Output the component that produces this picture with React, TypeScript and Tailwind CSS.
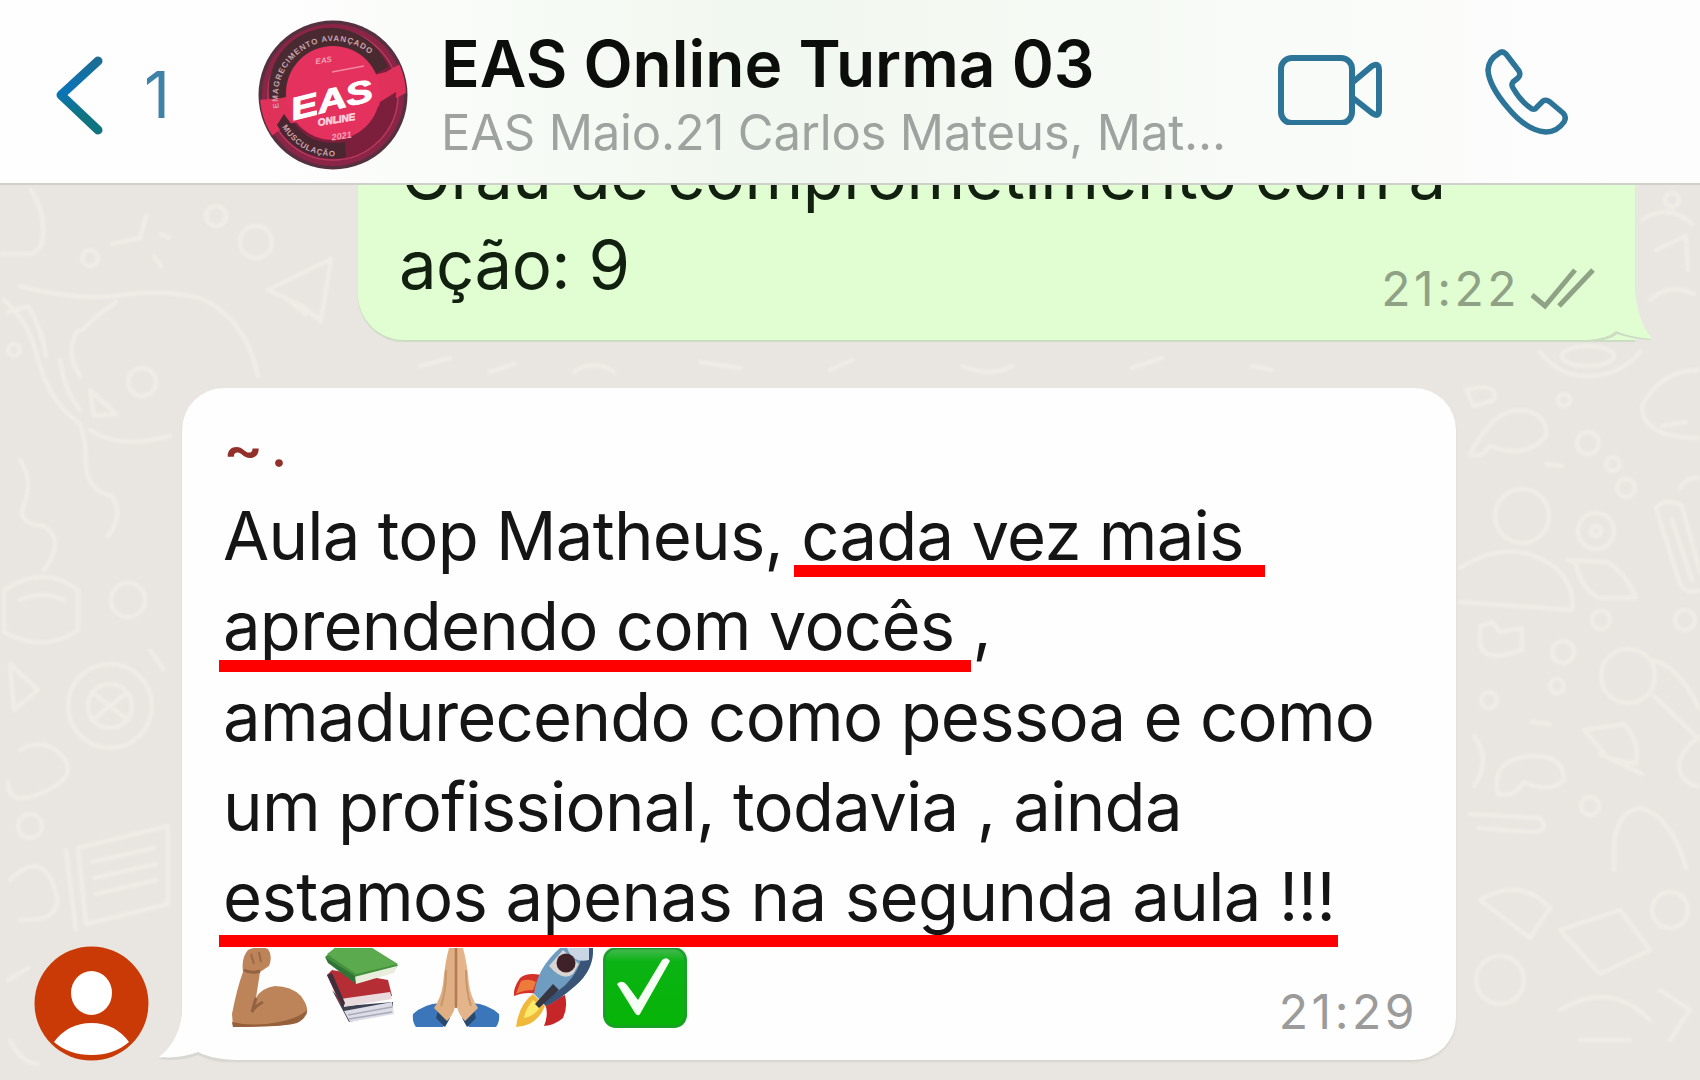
import type { ReactNode } from "react";

function Doodles() {
  return (
    <svg className="absolute inset-0 h-full w-full blur-[1px]" viewBox="0 0 1700 1080" fill="none" stroke="#efece6" strokeWidth="4.5" strokeLinecap="round" strokeLinejoin="round">
      <path d="M0 254h32q10 -5 11 -18q2 -24 -12 -46" />
      <path d="M112 244l28 -6l6 -22m8 40l7 10m0 -32l8 4" />
      <circle cx="216" cy="216" r="10" />
      <circle cx="256" cy="242" r="16" />
      <circle cx="90" cy="258" r="8" />
      <path d="M268 290l63 -31l-10 62l-20 -16zM288 300l18 14" />
      <path d="M20 286q50 14 96 10q40 -8 84 2q46 20 58 78M82 330q16 -16 34 -28" />
      <path d="M4 300q26 22 34 60q12 42 40 62q8 10 8 46q4 24 26 28q12 20 -4 40" />
      <path d="M8 312l20 -6q14 22 18 50M60 360q4 30 20 50M78 330q-14 22 2 46M90 390l26 24l-22 2z" />
      <circle cx="142" cy="382" r="14" />
      <circle cx="14" cy="350" r="6" />
      <path d="M20 460q14 20 4 44q-8 20 20 22q22 14 0 44M90 430q30 20 80 6" />
      <path d="M4 590q40 -26 74 0v40q-34 24 -74 2zM20 600q22 -10 44 0" />
      <circle cx="128" cy="600" r="17" />
      <circle cx="110" cy="706" r="42" />
      <circle cx="110" cy="706" r="22" />
      <path d="M92 692l36 28m0 -28l-36 28M10 664l28 26l-24 20zM150 650l14 20M20 750q24 -14 42 6t-18 36t-36 -10" />
      <path d="M78 848l90 -22v78l-82 20zM92 862l62 -14M94 878l62 -14M96 894l60 -14M66 850l10 80M10 880q30 -30 44 6t-34 34" />
      <circle cx="30" cy="826" r="12" />
      <path d="M8 980l20 -12M10 1040q10 22 28 24" />
      <path d="M1642 220q26 -18 50 4M1656 250l30 -14l2 34M1650 300q20 -18 44 -6" />
      <circle cx="1672" cy="200" r="7" />
      <path d="M1540 352q20 26 52 24q30 -2 48 -24" />
      <ellipse cx="1588" cy="356" rx="26" ry="10" />
      <path d="M1466 390q34 -8 28 10l-20 6zM1470 454q24 -46 52 -44q26 4 24 26q-20 24 -56 10q-10 14 -20 8z" />
      <path d="M1700 370q-40 0 -58 36q0 32 58 32M1662 426l24 -4" />
      <circle cx="1564" cy="400" r="6" />
      <circle cx="1588" cy="443" r="11" />
      <circle cx="1613" cy="464" r="7" />
      <circle cx="1626" cy="488" r="9" />
      <path d="M1546 464l16 2" />
      <circle cx="1522" cy="516" r="27" />
      <circle cx="1596" cy="531" r="18" />
      <circle cx="1596" cy="531" r="5" />
      <path d="M1460 568q54 -34 98 2q18 20 14 40l-112 -8M1568 560l40 2q20 14 28 36h-38q-18 -12 -22 -34z" />
      <path d="M1656 508q10 -12 26 -2l18 66M1656 508l24 76q8 12 20 6M1672 520l20 60M1680 488q6 -12 20 -10" />
      <path d="M1480 626l12 -4l8 10l22 -4v22l-22 6q-20 0 -20 -14z" />
      <circle cx="1601" cy="620" r="9" />
      <circle cx="1685" cy="620" r="10" />
      <circle cx="1563" cy="652" r="11" />
      <circle cx="1557" cy="686" r="7" />
      <circle cx="1489" cy="700" r="8" />
      <path d="M1532 722l18 2" />
      <circle cx="1628" cy="676" r="27" />
      <path d="M1650 660q28 4 50 50M1654 696l46 44" />
      <path d="M1584 730l40 -6q16 16 12 40l-28 -6zM1600 754l42 20" />
      <path d="M1474 736q18 24 0 50M1498 794q-8 -36 36 -38q30 0 30 24q-14 14 -40 2q-10 16 -26 12z" />
      <path d="M1700 736q-26 20 -20 36q6 14 20 14M1470 814l70 4q10 12 -6 14l-56 -4" />
      <circle cx="1590" cy="806" r="9" />
      <path d="M1614 870v-28q6 -34 28 -34q30 10 44 60M1480 900q40 -24 70 8l-20 30zM1560 930l60 -20l30 40l-50 24z" />
      <circle cx="1670" cy="910" r="18" />
      <circle cx="1500" cy="980" r="24" />
      <path d="M1560 1010q50 -30 90 10M1580 1040h50M1660 990l30 20l-20 30" />
      <path d="M420 366l30 -8m40 14l24 -8m60 8q20 -14 40 0M700 362l40 6m90 2l22 -10m110 6q30 12 50 0m120 2l30 -10m90 8l20 4" />
    </svg>
  );
}

function GroupLogo() {
  return (
    <svg className="ml-[85px] size-[150px] shrink-0" viewBox="0 0 150 150">
      <defs>
        <path id="ring-top" d="M21 88A56 56 0 0 1 126 52" />
        <path id="ring-bottom" d="M24 107A60 60 0 0 0 92 134" />
        <clipPath id="badge">
          <circle cx="75" cy="75" r="73" />
        </clipPath>
      </defs>
      <circle cx="75" cy="75" r="74.5" fill="#55303f" />
      <circle cx="75" cy="75" r="71" fill="#8a2547" />
      <circle cx="75" cy="75" r="65" fill="#7b1f3d" stroke="#b8395d" strokeWidth="1.5" />
      <path d="M15 92A61 61 0 0 1 130 47L117 54A48 48 0 0 0 28 86Z" fill="#4a2a31" />
      <path d="M20 102A61 61 0 0 0 88 137L86 124A50 50 0 0 1 33 98Z" fill="#4a2630" />
      <g clipPath="url(#badge)">
        <path d="M0 80L24 78L128 52L142 44L150 66L150 72L122 86L30 104L8 120Z" fill="#e0315b" />
      </g>
      <circle cx="75" cy="73" r="47" fill="#e5315d" />
      <path d="M122 82L138 72A64 64 0 0 1 94 136L88 123Q116 112 122 82Z" fill="#7b1f3d" />
      <path d="M26 94L19 105A62 62 0 0 0 88 137L87 122Q48 128 26 94Z" fill="#4a2630" />
      <g fontFamily="Liberation Sans" fontWeight="bold" fill="#c9a3aa">
        <text fontSize="8" letterSpacing="0.9">
          <textPath href="#ring-top">EMAGRECIMENTO AVANÇADO</textPath>
        </text>
        <text fontSize="8" letterSpacing="0.6">
          <textPath href="#ring-bottom">MUSCULAÇÃO</textPath>
        </text>
      </g>
      <g fontFamily="Liberation Sans" fontWeight="bold" fontStyle="italic" textAnchor="middle">
        <text transform="translate(76 90) rotate(-14) scale(1.32 1)" fontSize="31" fill="#fff" stroke="#fff" strokeWidth="1">EAS</text>
        <text transform="translate(79 103) rotate(-9)" fontSize="10" fill="#fbd5de" stroke="#fbd5de" strokeWidth="0.6">ONLINE</text>
        <text transform="translate(66 43) rotate(-8)" fontSize="8" fill="#f6a3b8">EAS</text>
        <text transform="translate(84 119) rotate(-8)" fontSize="9" fill="#f6a3b8">2021</text>
      </g>
      <path d="M74 52L106 46" stroke="#f28aa3" strokeWidth="1.5" />
    </svg>
  );
}

function Header() {
  return (
    <header className="relative z-10 flex h-[185px] items-start border-b-2 border-[#cfd0ca] bg-linear-to-r from-[#fefefe] from-15% via-[#f1f8ef] via-45% to-[#fdfdfd] to-95% pt-5">
      <svg className="mt-[33px] ml-[53px] h-[84px] w-[54px] shrink-0" viewBox="0 0 54 84" fill="none">
        <defs>
          <linearGradient id="back" x1="0" y1="0" x2="0" y2="84" gradientUnits="userSpaceOnUse">
            <stop offset="0.1" stopColor="#1b6d94" />
            <stop offset="0.45" stopColor="#0b74b8" />
            <stop offset="0.75" stopColor="#0f7480" />
          </linearGradient>
        </defs>
        <path d="M45 8L8 42L45 77" stroke="url(#back)" strokeWidth="9" strokeLinecap="round" strokeLinejoin="round" />
      </svg>
      <span className="mt-[35px] ml-[37px] w-[29px] text-[64px] leading-[80px] text-[#3f82a8]">1</span>
      <GroupLogo />
      <div className="ml-[33px] w-[830px] whitespace-nowrap">
        <h1 className="pt-1 text-[64px] leading-[80px] font-semibold text-[#0c0e0c]">EAS Online Turma 03</h1>
        <p className="mt-[-1px] text-[49px] leading-[60px] tracking-[-0.2px] text-[#9fa39f]">EAS Maio.21 Carlos Mateus, Mat...</p>
      </div>
      <svg className="mt-[35px] ml-[7px] h-[70px] w-[106px] shrink-0" viewBox="0 0 106 70" fill="none" stroke="#2d7499" strokeWidth="6" strokeLinejoin="round">
        <rect x="3" y="3" width="71" height="65" rx="11" />
        <path d="M75 27L94 11Q101 7 101 15V55Q101 63 94 58L75 43" />
      </svg>
      <svg className="mt-[28px] ml-[101px] h-[87px] w-[84px] shrink-0" viewBox="0 0 84 87" fill="none" stroke="#2d7499" strokeWidth="5.5" strokeLinejoin="round">
        <path d="M13 6Q17 2 21 6L34 23Q36 27 33 30L28 34Q26 37 28 40Q36 54 47 61Q50 62 52 59L58 53Q61 51 65 54L78 65Q82 69 79 74Q72 84 61 84Q42 83 23 60Q4 38 3 22Q4 11 13 6Z" />
      </svg>
    </header>
  );
}

function Marked({ bar, children }: { bar: string; children: ReactNode }) {
  return (
    <span className="relative">
      {children}
      <span className={`absolute h-3 bg-[#fe0000] ${bar}`} />
    </span>
  );
}

function Biceps() {
  return (
    <svg className="h-[82px] w-[88px]" viewBox="0 0 88 82">
      <path d="M25 2Q36 -3 45 1Q50 8 46 18L37 24L33 50Q38 40 52 38Q68 38 78 48Q88 62 82 68Q72 77 50 78L10 79L9 66Q14 40 20 24Q18 10 25 2Z" fill="#bd8459" />
      <path d="M9 74Q30 79 56 74Q76 70 84 62Q84 70 74 75Q60 79 10 79Z" fill="#96603c" />
      <path d="M33 50L29 64Q32 58 40 54M21 22Q28 26 37 23" stroke="#936242" strokeWidth="3" fill="none" />
      <path d="M28 6l3 10m5 -12l2 10" stroke="#9a6948" strokeWidth="2" />
    </svg>
  );
}

function Books() {
  return (
    <svg className="h-[82px] w-[88px]" viewBox="0 0 88 82">
      <path d="M14 42L31 74L75 64V54L28 58Z" fill="#3b4152" />
      <path d="M26 63L74 54L76 66L32 74Z" fill="#dcdce6" />
      <path d="M30 67l44 -8M31 71l43 -7" stroke="#a9aab8" strokeWidth="1.5" />
      <path d="M9 27L22 56L74 48L70 32L14 22Z" fill="#b52e35" />
      <path d="M22 51L72 44L74 51L26 59Z" fill="#e8dadd" />
      <path d="M9 27L14 25L27 55L25 60Z" fill="#3d2f3b" />
      <path d="M17 0H54L80 17L76 23L38 35L7 9Z" fill="#44913d" />
      <path d="M17 0H54L80 16L38 26L9 6Z" fill="#5baa4d" />
      <path d="M36 29L79 18L76 25L38 36Z" fill="#e9eddc" />
      <path d="M7 9L37 28L38 36L10 15Z" fill="#317536" />
    </svg>
  );
}

function Pray() {
  return (
    <svg className="h-[82px] w-[88px]" viewBox="0 0 88 82">
      <path d="M1 66Q12 56 28 55L36 72L31 79H4Q0 74 1 66ZM87 66Q76 56 60 55L52 72L57 79H84Q88 74 87 66Z" fill="#3a76b9" />
      <path d="M28 55L38 70L33 79L24 70ZM60 55L50 70L55 79L64 70Z" fill="#27486f" />
      <path d="M37 0H43V58Q42 66 35 73L22 60Q29 50 31 36Q33 14 37 0Z" fill="#dfae82" />
      <path d="M51 0H45V58Q46 66 53 73L66 60Q59 50 57 36Q55 14 51 0Z" fill="#e4b58b" />
      <path d="M44 0V60" stroke="#b07b55" strokeWidth="2.5" />
      <path d="M34 22Q34 44 29 58M54 22Q54 44 59 58" stroke="#c8966d" strokeWidth="2" fill="none" />
    </svg>
  );
}

function Rocket() {
  return (
    <svg className="h-[82px] w-[88px]" viewBox="0 0 88 82">
      <path d="M26 46Q12 56 9 79Q30 78 38 58Z" fill="#f0b93b" />
      <path d="M26 52Q18 62 17 70Q28 68 34 58Z" fill="#fbe96a" />
      <path d="M34 27Q20 24 13 30Q6 40 7 48Q18 43 30 46Z" fill="#d3322b" />
      <path d="M58 47Q61 60 56 70Q48 77 37 78Q42 66 38 56Z" fill="#c72628" />
      <path d="M14 33Q22 30 29 34L26 42Q16 42 9 46Z" fill="#ee7a3c" />
      <path d="M53 0H86Q87 22 68 38Q52 52 39 58L27 46Q30 20 53 0Z" fill="#6f9cc1" />
      <path d="M76 0H86Q87 22 68 38Q52 52 39 58L34 53Q74 34 76 0Z" fill="#3a5478" />
      <path d="M60 0Q66 16 82 12V0Z" fill="#c9d5e2" />
      <path d="M42 18Q56 34 66 26L72 16L56 2Z" fill="#d8d5d3" />
      <circle cx="59" cy="15" r="9.5" fill="#3f2229" />
      <path d="M46 36L28 56L32 60L52 42Z" fill="#373744" />
    </svg>
  );
}

function Check() {
  return (
    <svg className="h-[82px] w-[88px]" viewBox="0 0 88 82">
      <defs>
        <linearGradient id="tile" x1="0" y1="0" x2="0" y2="1">
          <stop offset="0" stopColor="#4cba58" />
          <stop offset="0.18" stopColor="#0bb314" />
          <stop offset="1" stopColor="#06b406" />
        </linearGradient>
      </defs>
      <rect x="2" y="-1" width="84" height="81" rx="13" fill="url(#tile)" />
      <rect x="3.5" y="0.5" width="81" height="78" rx="12" fill="none" stroke="#1d9a30" strokeWidth="2" />
      <path d="M16 36Q21 31 26 37L37 52L61 12Q66 8 69 13L39 66Q37 69 34 65Z" fill="#f6fff4" />
    </svg>
  );
}

function OutgoingMessage() {
  return (
    <article className="relative ml-[358px] h-[155px] w-[1277px] rounded-bl-[46px] bg-[#e1fdd2] pl-[41px] shadow-[0_2px_1px_#cbdcc2]">
      <svg className="absolute right-[-18px] bottom-[-3px] h-[56px] w-[66px]" viewBox="0 0 66 56">
        <path d="M48 4Q50 38 64 53Q44 52 30 47Q22 54 0 55" fill="#cbdcc2" />
        <path d="M0 0H48Q50 34 65 52Q42 50 29 44Q20 52 0 53Z" fill="#e1fdd2" />
      </svg>
      <p className="relative mt-[-55px] whitespace-nowrap text-[67px] leading-[90px] text-[#122010]">
        <span className="block pl-0.5 tracking-[-0.52px]">Grau de comprometimento com a</span>
        <span className="block tracking-[-0.5px]">ação: 9</span>
      </p>
      <div className="absolute right-[40px] bottom-[21px] flex items-center text-[#8fa286]">
        <time className="text-[48px] leading-[60px] tracking-[3.5px]">21:22</time>
        <svg className="ml-[11px] h-[42px] w-[64px]" viewBox="0 0 64 42" fill="none" stroke="currentColor" strokeWidth="5">
          <path d="M1 27L14 38L44 2M28 38L62 2" />
        </svg>
      </div>
    </article>
  );
}

function IncomingMessage() {
  return (
    <div className="relative mt-12 flex items-end pl-[34px]">
      <svg className="mb-[-1px] size-[115px] shrink-0" viewBox="0 0 115 115">
        <circle cx="57.5" cy="57.5" r="57" fill="#c93a06" />
        <ellipse cx="57.5" cy="47" rx="20.5" ry="22" fill="#fff" />
        <path d="M20 96Q34 77 57.5 77T95 96Q80 109 57.5 109T20 96Z" fill="#fff" />
      </svg>
      <article className="relative ml-[33px] h-[672px] w-[1274px] rounded-[42px] bg-[#fefefe] pt-[23px] pl-[41px] shadow-[0_2px_2px_#d6d4cd]">
        <svg className="absolute bottom-[-2px] left-[-24px] h-[70px] w-[84px]" viewBox="0 0 84 70">
          <path d="M24 0V20Q22 50 2 67Q22 70 40 63Q56 70 84 69V0Z" fill="#d9d7d1" />
          <path d="M24 0V20Q22 48 1 65Q22 67 40 60Q56 68 84 68V0Z" fill="#fefefe" />
        </svg>
        <div className="relative">
          <p className="flex h-20 text-[50px] leading-[76px] font-semibold text-[#93302a]">
            <span className="w-[48px] origin-left scale-x-120">~</span>
            <span>.</span>
          </p>
          <p className="whitespace-nowrap text-[67px] leading-[90.3px] text-[#151515]">
            <span className="block tracking-[-0.75px]">
              Aula top Matheus, <Marked bar="bottom-[-1px] left-[-7px] w-[471px]">cada vez mais</Marked>
            </span>
            <span className="block tracking-[-0.75px]">
              <Marked bar="bottom-[-6px] left-[-4px] w-[752px]">aprendendo com vocês</Marked> ,
            </span>
            <span className="block tracking-[-0.74px]">amadurecendo como pessoa e como</span>
            <span className="block tracking-[-0.72px]">um profissional, todavia , ainda</span>
            <span className="block tracking-[-0.6px]">
              <Marked bar="bottom-[-10px] left-[-4px] w-[1119px]">estamos apenas na segunda aula !!!</Marked>
            </span>
          </p>
          <div className="mt-1.5 flex gap-[6.5px]">
            <Biceps />
            <Books />
            <Pray />
            <Rocket />
            <Check />
          </div>
        </div>
        <time className="absolute right-[38px] bottom-[18px] text-[48px] leading-[60px] tracking-[3.5px] text-[#9b9b9b]">21:29</time>
      </article>
    </div>
  );
}

export default function App() {
  return (
    <div className="relative flex h-[1080px] w-[1700px] flex-col overflow-hidden bg-[#e9e6e2] font-[Inter,sans-serif]">
      <Doodles />
      <Header />
      <main className="relative flex min-h-0 flex-1 flex-col overflow-hidden">
        <OutgoingMessage />
        <IncomingMessage />
      </main>
    </div>
  );
}
